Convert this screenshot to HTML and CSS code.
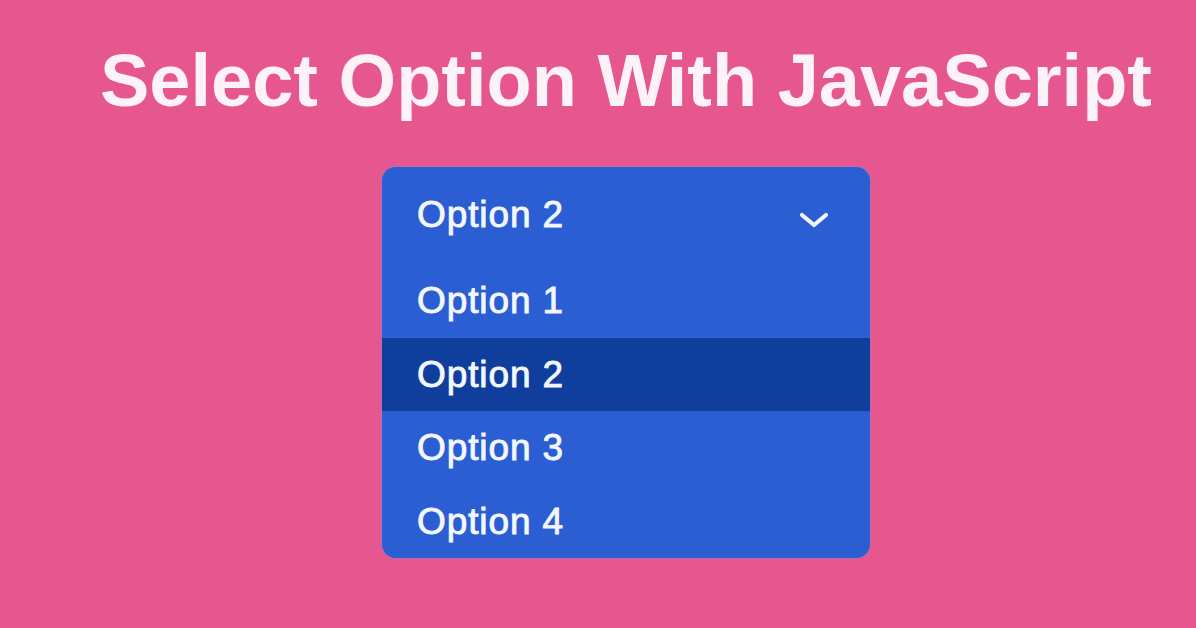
FILE: index.html
```html
<!DOCTYPE html>
<html lang="en">
<head>
<meta charset="utf-8">
<title>Select Option With JavaScript</title>
<link rel="stylesheet" href="styles.css">
</head>
<body>
<main class="page">
  <h1 class="title">Select Option With JavaScript</h1>
  <div class="select">
    <div class="select-head">
      <span class="select-value">Option 2</span>
      <svg class="chevron" width="30" height="18" viewBox="0 0 30 18" aria-hidden="true">
        <path d="M3 4 L15 14 L27 4" fill="none" stroke="#f2f6ff" stroke-width="4.2" stroke-linecap="round" stroke-linejoin="round"/>
      </svg>
    </div>
    <ul class="options">
      <li class="option">Option 1</li>
      <li class="option is-selected">Option 2</li>
      <li class="option">Option 3</li>
      <li class="option">Option 4</li>
    </ul>
  </div>
</main>
</body>
</html>
```
FILE: styles.css
```css
html, body {
  margin: 0;
  padding: 0;
}

body {
  background: #e6568f;
  font-family: "Liberation Sans", Arial, Helvetica, sans-serif;
  width: 1196px;
  height: 628px;
  overflow: hidden;
}

.page {
  padding: 44px 0 0 56px;
  display: flex;
  flex-direction: column;
  align-items: center;
}

.title {
  margin: 0;
  font-size: 74px;
  line-height: 74px;
  font-weight: 700;
  color: #fdf2f7;
  white-space: nowrap;
}

.select {
  margin-top: 49px;
  width: 488px;
  background: #2a5ed2;
  border-radius: 14px;
  overflow: hidden;
  box-shadow: 0 0 0 1px rgba(120, 140, 220, 0.5);
}

.select-head {
  height: 97px;
  padding: 0 41px 2px 35px;
  box-sizing: border-box;
  display: flex;
  align-items: center;
  justify-content: space-between;
}

.select-value,
.option {
  font-size: 37px;
  letter-spacing: 0.9px;
  color: #f4f7ff;
  -webkit-text-stroke: 0.9px #f4f7ff;
}

.chevron {
  display: block;
  margin-top: 10px;
}

.options {
  list-style: none;
  margin: 0;
  padding: 0;
}

.option {
  height: 73.5px;
  line-height: 73.5px;
  padding-left: 35px;
}

.option.is-selected {
  background: #0f3e9c;
}
```
